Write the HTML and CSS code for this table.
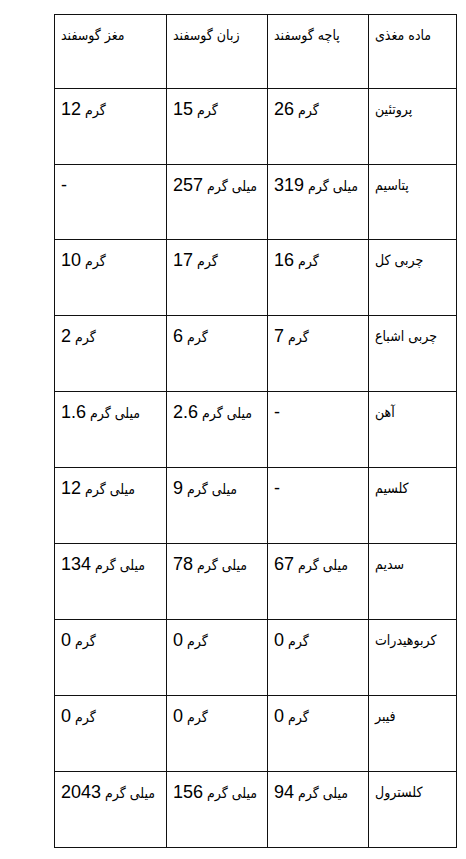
FILE: index.html
```html
<!DOCTYPE html>
<html lang="fa">
<head>
<meta charset="utf-8">
<title>ارزش غذایی</title>
<link rel="stylesheet" href="styles.css">
</head>
<body>
<table class="nutrition" dir="rtl">
  <colgroup>
    <col class="c1"><col class="c2"><col class="c3"><col class="c4">
  </colgroup>
  <tr><td>ماده مغذی</td><td>پاچه گوسفند</td><td>زبان گوسفند</td><td>مغز گوسفند</td></tr>
  <tr><td>پروتئین</td><td>گرم <span class="num">26</span></td><td>گرم <span class="num">15</span></td><td>گرم <span class="num">12</span></td></tr>
  <tr><td>پتاسیم</td><td>میلی گرم <span class="num">319</span></td><td>میلی گرم <span class="num">257</span></td><td><span class="num">-</span></td></tr>
  <tr><td>چربی کل</td><td>گرم <span class="num">16</span></td><td>گرم <span class="num">17</span></td><td>گرم <span class="num">10</span></td></tr>
  <tr><td>چربی اشباع</td><td>گرم <span class="num">7</span></td><td>گرم <span class="num">6</span></td><td>گرم <span class="num">2</span></td></tr>
  <tr><td>آهن</td><td><span class="num">-</span></td><td>میلی گرم <span class="num">2.6</span></td><td>میلی گرم <span class="num">1.6</span></td></tr>
  <tr><td>کلسیم</td><td><span class="num">-</span></td><td>میلی گرم <span class="num">9</span></td><td>میلی گرم <span class="num">12</span></td></tr>
  <tr><td>سدیم</td><td>میلی گرم <span class="num">67</span></td><td>میلی گرم <span class="num">78</span></td><td>میلی گرم <span class="num">134</span></td></tr>
  <tr><td>کربوهیدرات</td><td>گرم <span class="num">0</span></td><td>گرم <span class="num">0</span></td><td>گرم <span class="num">0</span></td></tr>
  <tr><td>فیبر</td><td>گرم <span class="num">0</span></td><td>گرم <span class="num">0</span></td><td>گرم <span class="num">0</span></td></tr>
  <tr><td>کلسترول</td><td>میلی گرم <span class="num">94</span></td><td>میلی گرم <span class="num">156</span></td><td>میلی گرم <span class="num">2043</span></td></tr>
</table>
</body>
</html>
```
FILE: styles.css
```css
html, body {
  margin: 0;
  padding: 0;
  background: #fff;
}
body {
  font-family: "DejaVu Sans Condensed", "DejaVu Sans", sans-serif;
  font-size: 14px;
  color: #000;
}
.nutrition {
  border-collapse: collapse;
  table-layout: fixed;
  width: 403px;
  height: 834px;
  margin: 14px 0 0 54px;
}
.nutrition .c1 { width: 88px; }
.nutrition .c2 { width: 101px; }
.nutrition .c3 { width: 101px; }
.nutrition .c4 { width: 112px; }
.nutrition td {
  border: 1px solid #111;
  vertical-align: top;
  text-align: left;
  padding: 10px 6px 0 6px;
  white-space: nowrap;
  overflow: hidden;
  line-height: 21px;
}
.num {
  font-family: "Liberation Sans", Arial, sans-serif;
  font-size: 18px;
}
```
